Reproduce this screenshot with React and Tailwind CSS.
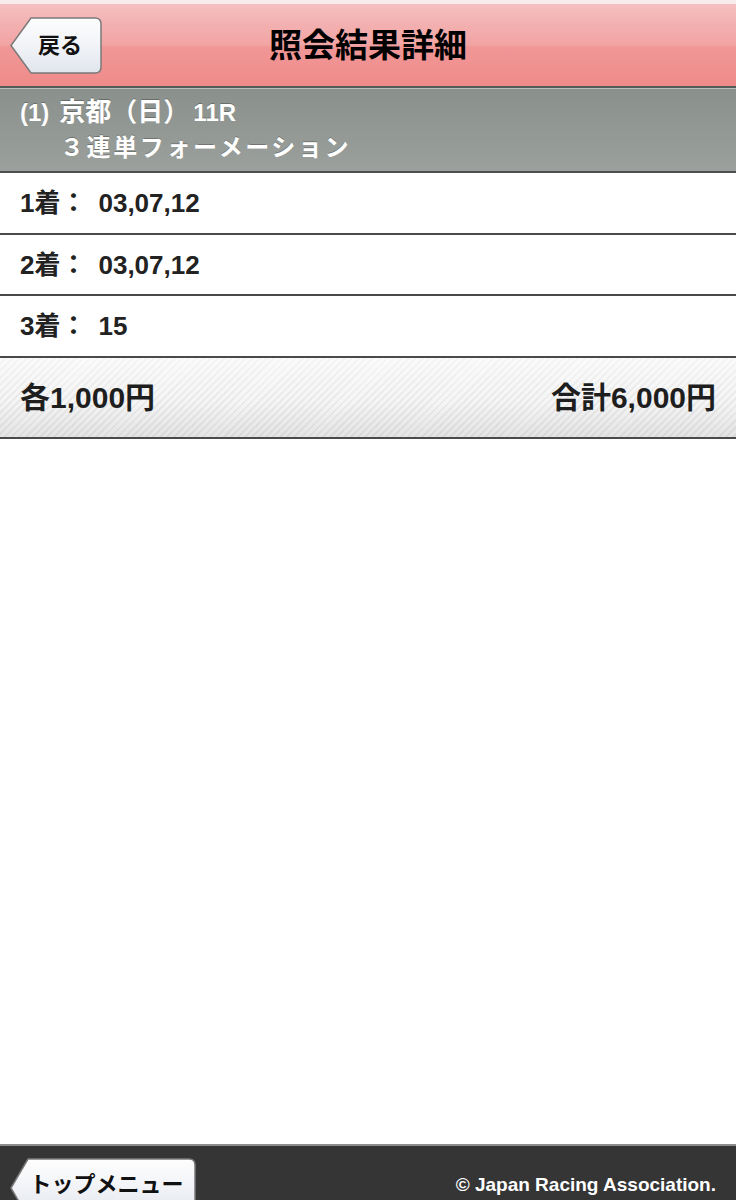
import React from "react";

const FONT = { fontFamily: '"Liberation Sans", "Noto Sans CJK JP", sans-serif' };

function BackShape({ w, h, inset }) {
  const r = 6;
  return (
    <svg
      className="absolute inset-0"
      width={w}
      height={h}
      viewBox={`0 0 ${w} ${h}`}
    >
      <defs>
        <linearGradient id={`g${w}`} x1="0" y1="0" x2="0" y2="1">
          <stop offset="0" stopColor="#fefefe" />
          <stop offset="0.5" stopColor="#f1f3f7" />
          <stop offset="1" stopColor="#e1e5ec" />
        </linearGradient>
      </defs>
      <path
        d={`M${inset} 1 L${w - 1 - r} 1 Q${w - 1} 1 ${w - 1} ${1 + r} L${w - 1} ${h - 1 - r} Q${w - 1} ${h - 1} ${w - 1 - r} ${h - 1} L${inset} ${h - 1} L1 ${h / 2} Z`}
        fill={`url(#g${w})`}
        stroke="#7a7a7a"
        strokeWidth="1.5"
      />
    </svg>
  );
}

export default function App() {
  return (
    <div
      className="w-[736px] h-[1200px] flex flex-col bg-white overflow-hidden"
      style={FONT}
    >
      <div className="h-[4px] bg-[#f7eded]" />
      {/* Header */}
      <header className="relative h-[84px] flex items-center justify-center border-b-2 border-[#555a58] bg-[linear-gradient(to_bottom,#f6c0c0_0%,#f3b0b0_25%,#f2a4a4_50%,#f09797_52%,#ef8b89_100%)]">
        <button className="absolute left-[10px] top-[13px] w-[92px] h-[57px] flex items-center justify-center pl-[8px]">
          <BackShape w={92} h={57} inset={21} />
          <span className="relative text-[22px] font-bold text-[#111] leading-none">
            戻る
          </span>
        </button>
        <h1 className="text-[33px] font-bold text-black leading-none">
          照会結果詳細
        </h1>
      </header>
      {/* Race band */}
      <div className="h-[85px] flex flex-col justify-center px-[20px] border-t border-[#b9bdba] border-b-2 border-b-[#4d4f4e] bg-[linear-gradient(to_bottom,#8a908c,#9ba09d)] text-white font-bold">
        <div className="text-[24px] leading-[35px] [text-shadow:0_-1px_0_rgba(0,0,0,0.25)]">
          <span className="mr-[10px]">(1)</span>
          <span className="text-[26px]">京都（日）</span>
          <span className="ml-[4px]">11R</span>
        </div>
        <div className="text-[24px] leading-[35px] pl-[40px] tracking-[2.6px] [text-shadow:0_-1px_0_rgba(0,0,0,0.25)]">
          ３連単フォーメーション
        </div>
      </div>
      {/* Rows */}
      {[
        ["1着：", "03,07,12", "h-[62px]"],
        ["2着：", "03,07,12", "h-[61px]"],
        ["3着：", "15", "h-[62px]"],
      ].map(([label, val, h], i) => (
        <div
          key={i}
          className={`${h} flex items-center px-[20px] border-b-2 border-[#4a4a4a] bg-white text-[26px] font-bold text-[#222] leading-none`}
        >
          <span>{label}</span>
          <span className="ml-[12px]">{val}</span>
        </div>
      ))}
      {/* Total */}
      <div className="h-[81px] flex items-center justify-between px-[20px] border-b-2 border-[#4a4a4a] bg-[image:linear-gradient(to_bottom,rgba(255,255,255,0.55),rgba(255,255,255,0)_55%,rgba(0,0,0,0.07)),repeating-linear-gradient(135deg,#f5f5f5_0px,#f5f5f5_3px,#e9e9e9_3px,#e9e9e9_5px)] text-[30px] font-bold text-[#1e1e1e] leading-none">
        <span>各1,000円</span>
        <span>合計6,000円</span>
      </div>
      <div className="flex-1 bg-white" />
      {/* Footer */}
      <footer className="relative h-[56px] border-t-2 border-[#8c8c8c] bg-[#353535] flex items-center justify-end pr-[20px] overflow-hidden">
        <button className="absolute left-[10px] top-[12px] w-[186px] h-[60px] flex items-start justify-center pl-[7px] pt-[16px]">
          <BackShape w={186} h={60} inset={18} />
          <span className="relative text-[22px] font-bold text-[#111] leading-none">
            トップメニュー
          </span>
        </button>
        <span className="text-[19px] font-bold text-white leading-none mt-[22px]">
          © Japan Racing Association.
        </span>
      </footer>
    </div>
  );
}
